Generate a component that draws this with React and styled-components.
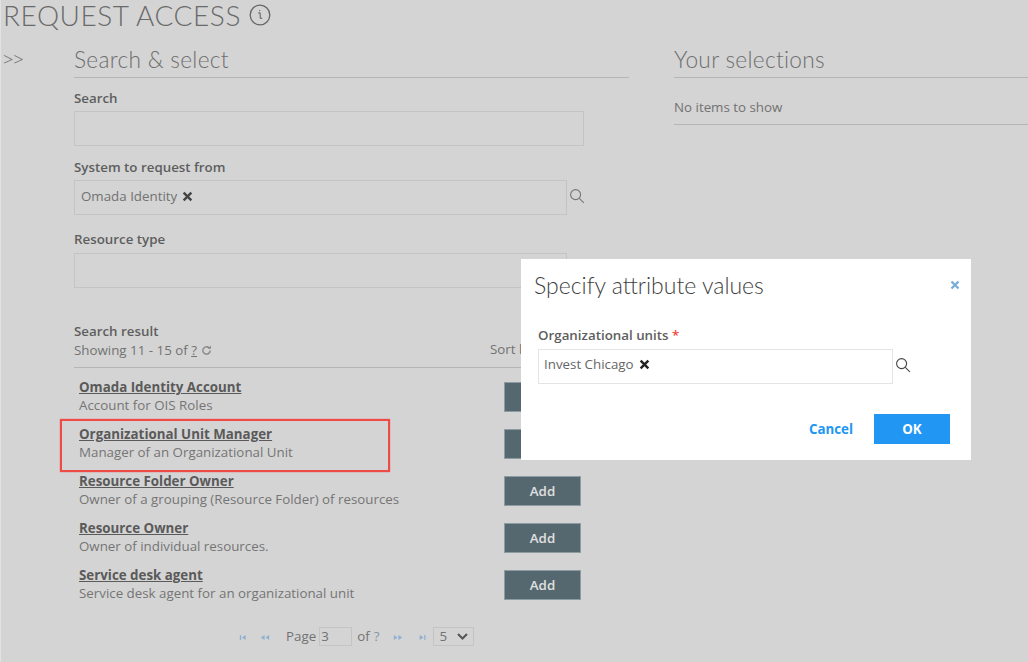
import React from 'react';
import styled, { createGlobalStyle } from 'styled-components';

const Global = createGlobalStyle`
  html, body { margin: 0; padding: 0; background: #d4d4d4; }
  body { font-family: "Open Sans", "Liberation Sans", sans-serif; color: #6b6b6b; }
  * { box-sizing: border-box; }
`;
const Page = styled.div`
  position: relative; width: 1028px; height: 662px; overflow: hidden; background: #d4d4d4;
  border-left: 1px solid #e2e2e2;
`;
const PageTitle = styled.h1`
  margin: 0; padding: 0 0 0 2px; height: 30px; display: flex; align-items: center; gap: 8px;
  font: 300 28px/30px Lato, sans-serif; color: #6a6a6a; letter-spacing: .55px;
`;
const Body = styled.div`display: flex; padding-top: 15px;`;
const Toggle = styled.div`width: 73px; padding: 1px 0 0 2px; font: 300 18px/26px "Open Sans", sans-serif; color: #666;`;
const Left = styled.div`width: 555px;`;
const Right = styled.div`margin-left: 45px; flex: 1;`;
const SectionTitle = styled.h2`
  margin: 0; height: 33px; font: 300 22.7px/30px Lato, sans-serif; color: #6e6e6e; border-bottom: 1px solid #b5b5b5;
  letter-spacing: .3px;
`;
const Empty = styled.div`height: 47px; padding-top: 20px; font-size: 13.33px; line-height: 18px; border-bottom: 1px solid #b5b5b5; color: #727272;`;
const Label = styled.div`font-size: 13.33px; line-height: 18px; font-weight: 600; color: #5e5e5e;`;
const Field = styled.div`margin-top: ${p => p.$top}px;`;
const InputRow = styled.div`display: flex; align-items: center; margin-top: ${p => p.$gap || 4}px;`;
const Input = styled.div`
  width: ${p => p.$w}px; height: 35px; display: flex; align-items: center;
  padding: ${p => p.$modal ? '0 0 6px 5px' : '0 0 4px 6px'};
  border: 1px solid ${p => p.$modal ? '#e4e4e4' : '#c4c4c4'}; font-size: 13.33px; color: ${p => p.$modal ? '#666' : '#727272'};
  background: ${p => p.$modal ? '#fff' : 'transparent'};
`;
const Remove = styled.svg`width: 11px; height: 11px; margin-left: 5px; margin-top: 1px;`;
const SearchIcon = styled.svg`width: 16px; height: 16px; margin: -3px 0 0 2px;`;
const ResultHead = styled.div`margin-top: 34px; position: relative; height: 46px; border-bottom: 1px solid #b5b5b5; width: 510px;`;
const Showing = styled.div`display: flex; align-items: center; margin-top: 1px; font-size: 13.33px; line-height: 18px; color: #727272; gap: 4px;`;
const Unknown = styled.span`text-decoration: underline;`;
const Sort = styled.div`position: absolute; left: 416px; top: 18px; font-size: 13.33px; line-height: 18px; color: #727272;`;
const List = styled.div`width: 510px; padding-top: 10px; display: flex; flex-direction: column; gap: 11px;`;
const Row = styled.div`display: flex; justify-content: space-between; height: 36px; padding-left: 5px; padding-right: 3px;`;
const RowName = styled.a`display: block; font-size: 13.33px; line-height: 18px; font-weight: 700; color: #5a5a5a; text-decoration: underline;`;
const RowDesc = styled.div`font-size: 13.33px; line-height: 18px; color: #757575;`;
const AddBtn = styled.div`
  width: 77px; height: 30px; margin-top: 4px; background: #56686f; color: #e0e0e0; display: flex; align-items: center; justify-content: center;
  font-size: 13.33px; font-weight: 600; border: 1px solid #8d9ca2;
`;
const Pager = styled.div`display: flex; align-items: center; height: 20px; margin-top: 24px; margin-left: 165px; font-size: 13.33px; color: #727272;`;
const PageIcon = styled.svg`width: 10px; height: 5px; margin-right: ${p => p.$mr}px; margin-top: 2px;`;
const PageInput = styled.div`width: 33px; height: 19px; border: 1px solid #c4c4c4; margin: 0 5px 0 3px; padding-left: 1px; line-height: 17px;`;
const Q = styled.span`color: #8596a8; margin: 0 14px 0 4px;`;
const Select = styled.div`width: 41px; height: 19px; border: 1px solid #c4c4c4; display: flex; align-items: center; justify-content: space-between; padding: 0 5px; font-size: 13.33px;`;
const Highlight = styled.div`position: absolute; left: 59px; top: 419px; width: 330px; height: 53px; border: 2px solid #ee4b44; box-shadow: 0 0 1px #ee4b44;`;
const Modal = styled.div`
  position: absolute; left: 520px; top: 259px; width: 450px; height: 201px; background: #fff; padding: 0 21px 0 17px;
`;
const ModalHead = styled.div`display: flex; align-items: center; justify-content: space-between; height: 52px;`;
const ModalTitle = styled.div`margin-left: -4px; font: 300 23px/30px Lato, sans-serif; color: #3f3f3f;`;
const ModalClose = styled.svg`width: 10px; height: 10px; margin-right: -10px;`;
const ModalField = styled.div`margin-top: 15px;`;
const Req = styled.span`color: #f44336;`;
const Actions = styled.div`display: flex; justify-content: flex-end; align-items: center; gap: 21px; margin-top: 30px;`;
const CancelBtn = styled.div`font-size: 13.33px; font-weight: 700; color: #2196f3;`;
const OkBtn = styled.div`width: 76px; height: 30px; background: #2196f3; color: #fff; font-size: 13.33px; font-weight: 700; display: flex; align-items: center; justify-content: center;`;

const X = ({ color = '#444' }) => (
  <Remove viewBox="0 0 10 10"><path d="M1.500 1.500l7 7M8.500 1.500l-7 7" stroke={color} strokeWidth="2.200" /></Remove>
);
const Mag = ({ color = '#777' }) => (
  <SearchIcon viewBox="0 0 16 16" fill="none" stroke={color} strokeWidth="1.100">
    <circle cx="6.600" cy="6.600" r="5" /><path d="M10.300 10.300l4.500 4.500" />
  </SearchIcon>
);
const Nav = ({ d, mr }) => (
  <PageIcon $mr={mr} viewBox="0 0 10 6" fill="#8fb0d0">
    {d === 'first' && <path d="M0 0h1.500v6H0zM7 0v6L2.500 3z" />}
    {d === 'prev' && <path d="M4.500 0v6L0 3zM10 0v6L5.500 3z" />}
    {d === 'next' && <path d="M0 0v6l4.500-3zM5.500 0v6L10 3z" />}
    {d === 'last' && <path d="M1 0v6l4.500-3zM6.500 0H8v6H6.500z" />}
  </PageIcon>
);

const rows = [
  ['Omada Identity Account', 'Account for OIS Roles'],
  ['Organizational Unit Manager', 'Manager of an Organizational Unit'],
  ['Resource Folder Owner', 'Owner of a grouping (Resource Folder) of resources'],
  ['Resource Owner', 'Owner of individual resources.'],
  ['Service desk agent', 'Service desk agent for an organizational unit'],
];

export default function App() {
  return (
    <Page>
      <Global />
      <PageTitle>
        REQUEST ACCESS
        <svg width="22" height="22" viewBox="0 0 22 22" fill="none" stroke="#666" strokeWidth="1.300">
          <circle cx="11" cy="11" r="9.800" />
          <path d="M9.300 9.200c1-.6 1.900-.5 1.900.6v3.600c0 1 .8 1.200 1.900.7" strokeWidth="1.100" />
          <circle cx="10.800" cy="6.600" r=".7" fill="#666" stroke="none" />
        </svg>
      </PageTitle>
      <Body>
        <Toggle>&gt;&gt;</Toggle>
        <Left>
          <SectionTitle>Search &amp; select</SectionTitle>
          <Field $top={11}>
            <Label>Search</Label>
            <InputRow><Input $w={510} /></InputRow>
          </Field>
          <Field $top={12}>
            <Label>System to request from</Label>
            <InputRow>
              <Input $w={493}>Omada Identity<X /></Input>
              <Mag />
            </InputRow>
          </Field>
          <Field $top={15}>
            <Label>Resource type</Label>
            <InputRow $gap={5}><Input $w={493} /></InputRow>
          </Field>
          <ResultHead>
            <Label>Search result</Label>
            <Showing>
              <span>Showing 11 - 15 of <Unknown>?</Unknown></span>
              <svg width="11" height="11" viewBox="0 0 12 12" fill="none" stroke="#858585" strokeWidth="1.500">
                <path d="M10 6a4 4 0 1 1-1.300-3" /><path d="M10.800 .5v3.500H7.300" fill="#858585" stroke="none" />
              </svg>
            </Showing>
            <Sort>Sort by</Sort>
          </ResultHead>
          <List>
            {rows.map(([n, d]) => (
              <Row key={n}>
                <div><RowName>{n}</RowName><RowDesc>{d}</RowDesc></div>
                <AddBtn>Add</AddBtn>
              </Row>
            ))}
          </List>
          <Pager>
            <Nav d="first" mr={11} /><Nav d="prev" mr={16} />
            Page<PageInput>3</PageInput>of<Q>?</Q>
            <Nav d="next" mr={15} /><Nav d="last" mr={5} />
            <Select>5
              <svg width="11" height="7" viewBox="0 0 11 7" fill="none" stroke="#555" strokeWidth="2"><path d="M1 1l4.500 4.500L10 1" /></svg>
            </Select>
          </Pager>
        </Left>
        <Right>
          <SectionTitle>Your selections</SectionTitle>
          <Empty>No items to show</Empty>
        </Right>
      </Body>
      <Highlight />
      <Modal>
        <ModalHead>
          <ModalTitle>Specify attribute values</ModalTitle>
          <ModalClose viewBox="0 0 10 10"><path d="M1.500 1.500l7 7M8.500 1.500l-7 7" stroke="#7cadd8" strokeWidth="2.400" /></ModalClose>
        </ModalHead>
        <ModalField>
          <Label>Organizational units <Req>*</Req></Label>
          <InputRow $gap={5}>
            <Input $w={355} $modal>Invest Chicago<X color="#222" /></Input>
            <Mag color="#444" />
          </InputRow>
        </ModalField>
        <Actions>
          <CancelBtn>Cancel</CancelBtn>
          <OkBtn>OK</OkBtn>
        </Actions>
      </Modal>
    </Page>
  );
}
